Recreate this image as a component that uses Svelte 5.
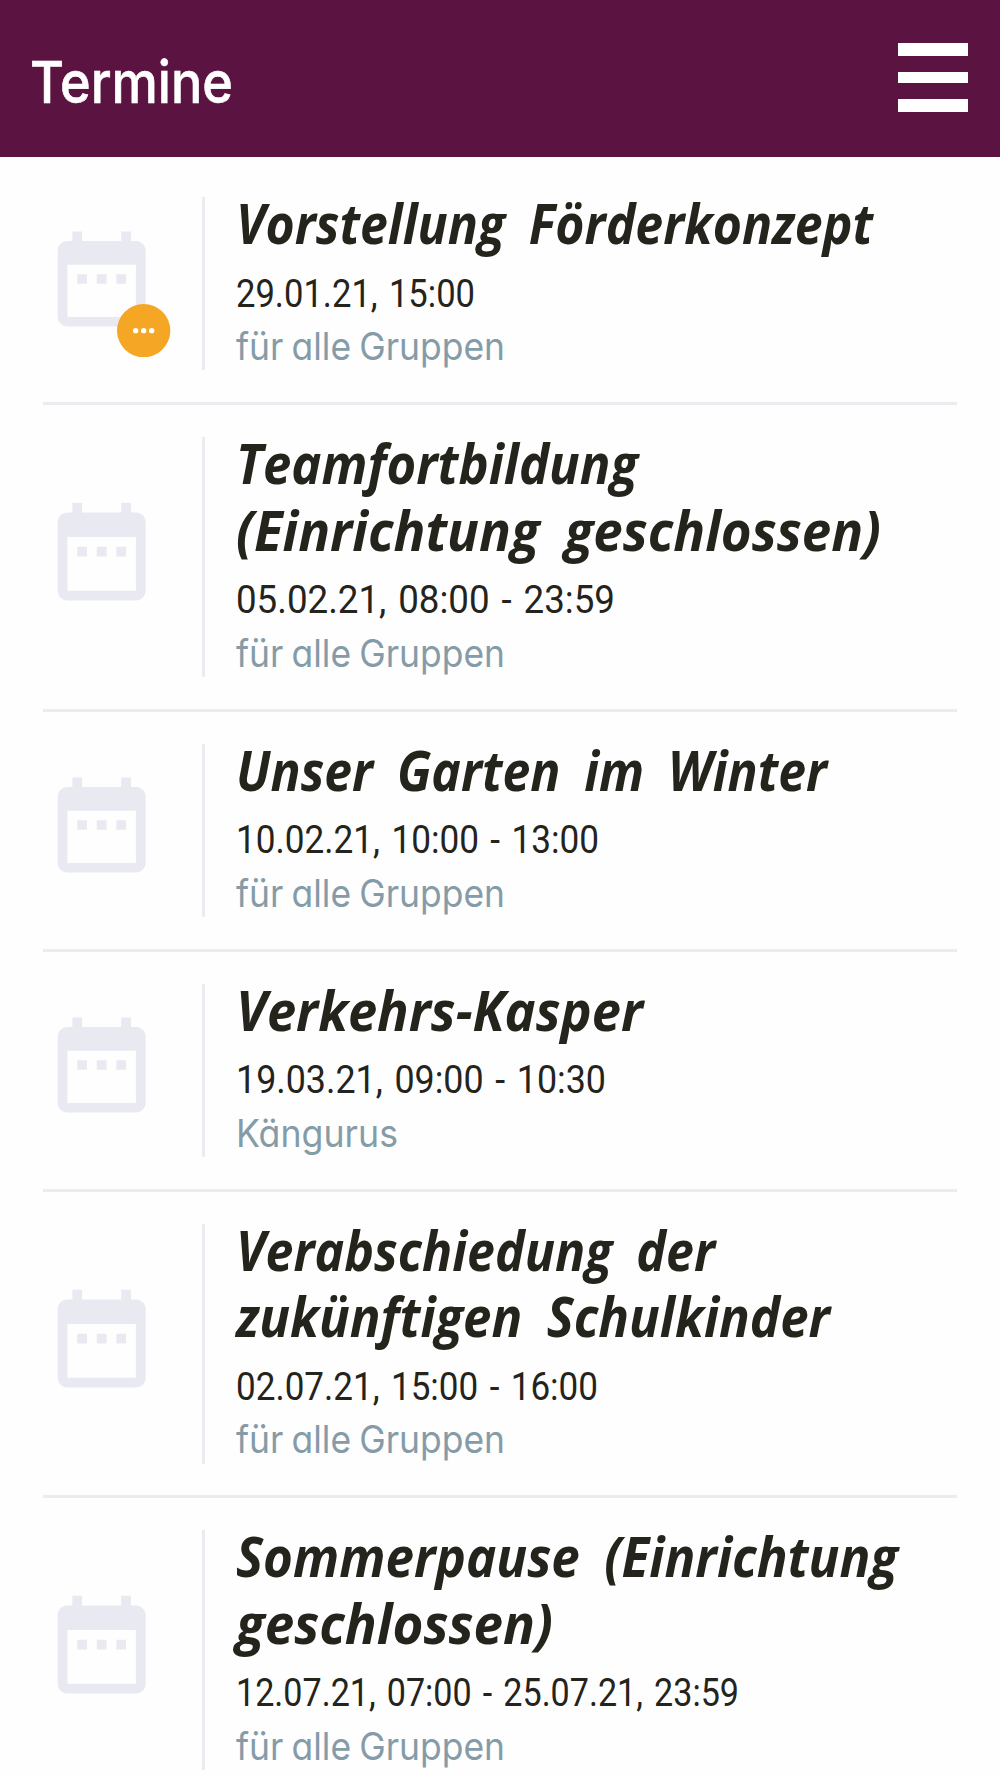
<script>
	// w = set width of each line in px
	const all = { text: 'für alle Gruppen', w: 269 };
	const events = [
		{
			title: [{ text: 'Vorstellung Förderkonzept', w: 637 }],
			date: { text: '29.01.21, 15:00', w: 239 },
			group: all,
			pending: true
		},
		{
			title: [
				{ text: 'Teamfortbildung', w: 402 },
				{ text: '(Einrichtung geschlossen)', w: 645 }
			],
			date: { text: '05.02.21, 08:00 - 23:59', w: 379 },
			group: all
		},
		{
			title: [{ text: 'Unser Garten im Winter', w: 591 }],
			date: { text: '10.02.21, 10:00 - 13:00', w: 363 },
			group: all
		},
		{
			title: [{ text: 'Verkehrs-Kasper', w: 407 }],
			date: { text: '19.03.21, 09:00 - 10:30', w: 370 },
			group: { text: 'Kängurus', w: 162 }
		},
		{
			title: [
				{ text: 'Verabschiedung der', w: 479 },
				{ text: 'zukünftigen Schulkinder', w: 594 }
			],
			date: { text: '02.07.21, 15:00 - 16:00', w: 362 },
			group: all
		},
		{
			title: [
				{ text: 'Sommerpause (Einrichtung', w: 662 },
				{ text: 'geschlossen)', w: 317 }
			],
			date: { text: '12.07.21, 07:00 - 25.07.21, 23:59', w: 503 },
			group: all
		}
	];
</script>

{#snippet line(l, cls, y)}
	<svg class="line {cls}">
		<text x="0" {y} textLength={l.w} lengthAdjust="spacingAndGlyphs">{l.text}</text>
	</svg>
{/snippet}

<div class="page">
	<header>
		<svg class="heading" width="240" height="100">
			<text x="0" y="73.5" textLength="203" lengthAdjust="spacingAndGlyphs">Termine</text>
		</svg>
		<div class="menu">
			<span></span>
			<span class="mid"></span>
			<span></span>
		</div>
	</header>

	<main>
		{#each events as e}
			<article>
				<div class="side">
					<div class="icon">
						<svg
							class="cal"
							class:short={e.title.length === 1}
							viewBox="0 0 24 24"
							preserveAspectRatio="none"
						>
							<path d="M9 11H7v2h2v-2zm4 0h-2v2h2v-2zm4 0h-2v2h2v-2zm2-7h-1V2h-2v2H8V2H6v2H5c-1.11 0-1.99.9-1.99 2L3 20a2 2 0 0 0 2 2h14c1.1 0 2-.9 2-2V6c0-1.1-.9-2-2-2zm0 16H5V9h14v11z" />
						</svg>
						{#if e.pending}
							<svg class="badge" viewBox="0 0 20 20">
								<circle cx="10" cy="10" r="10" />
								<g fill="#fff">
									<circle cx="7" cy="10" r="1" />
									<circle cx="10" cy="10" r="1" />
									<circle cx="13" cy="10" r="1" />
								</g>
							</svg>
						{/if}
					</div>
				</div>
				<div class="info">
					{#each e.title as t}
						{@render line(t, 'title', 46.5)}
					{/each}
					{@render line(e.date, 'date', 43)}
					{@render line(e.group, 'group', 43)}
				</div>
			</article>
		{/each}
	</main>
</div>

<style>
	:global(body) {
		margin: 0;
		background: #fff;
	}
	.page {
		width: 1000px;
		height: 1778px;
		overflow: hidden;
		background: #fefefe;
	}
	header {
		box-sizing: border-box;
		height: 157px;
		padding: 0 32px 0 30px;
		display: flex;
		align-items: center;
		justify-content: space-between;
		background: #5b1441;
	}
	.heading {
		overflow: visible;
		fill: #fff;
		stroke: #fff;
		stroke-width: 0.6;
		font: 500 58px Inter, sans-serif;
	}
	.menu {
		width: 70px;
		padding-bottom: 2px;
		display: flex;
		flex-direction: column;
		gap: 16px;
	}
	.menu span {
		height: 13.5px;
		background: #fff;
	}
	.menu .mid {
		height: 10.5px;
	}
	main {
		padding: 8px 43px 0 42.5px;
	}
	article {
		display: flex;
		padding: 32px 0 31.67px;
		border-bottom: 3px solid #ebecf0;
	}
	.side {
		box-sizing: border-box;
		width: 162.5px;
		display: flex;
		align-items: center;
		border-right: 3px solid #ebecf2;
	}
	.icon {
		position: relative;
		display: flex;
		padding-bottom: 10px;
	}
	.cal {
		width: 117.33px;
		height: 117.33px;
		fill: #e9eaf1;
	}
	.short {
		height: 114px;
	}
	.badge {
		position: absolute;
		left: 74.8px;
		top: 82px;
		width: 53.33px;
		height: 53.33px;
		fill: #f6a625;
	}
	.info {
		flex: 1;
		padding-left: 31px;
	}
	.line {
		display: block;
		width: 100%;
		height: 53.33px;
		overflow: visible;
	}
	.title {
		height: 66.67px;
		fill: #24231c;
		font: italic 700 55px 'Open Sans', sans-serif;
		word-spacing: 12px;
	}
	.date {
		fill: #24231c;
		font: 400 39px Roboto, sans-serif;
		word-spacing: 3px;
	}
	.group {
		fill: #859ca8;
		font: 400 38.5px Inter, sans-serif;
		font-feature-settings: 'cv11';
		word-spacing: -2px;
	}
</style>
